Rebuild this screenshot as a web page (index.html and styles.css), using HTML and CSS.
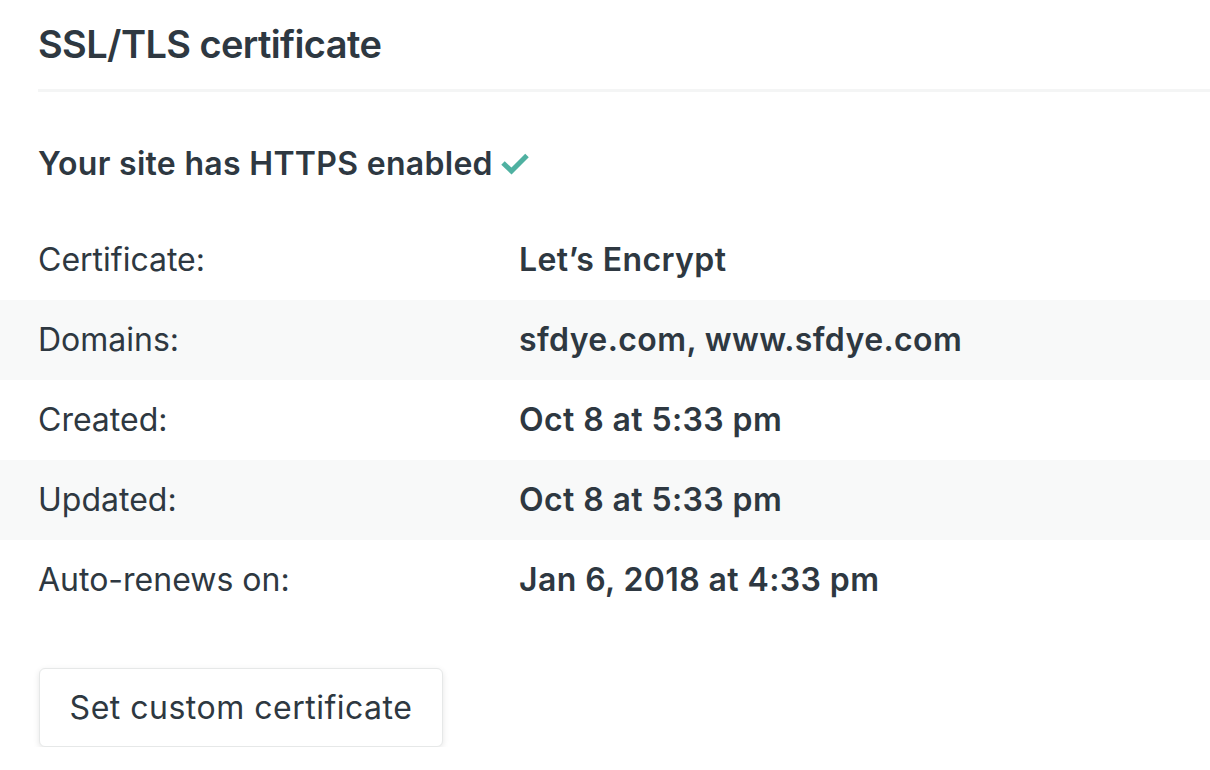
FILE: index.html
```html
<!DOCTYPE html>
<html>
<head>
<meta charset="utf-8">
<link rel="stylesheet" href="styles.css">
</head>
<body>
<section class="card">
  <h2 class="title">SSL/TLS certificate</h2>
  <div class="divider"></div>
  <p class="status">Your site has HTTPS enabled <svg class="check" width="28" height="24" viewBox="0 0 28 24"><path d="M2 11 L10.5 19 L26 3.5" fill="none" stroke="#4fb1a1" stroke-width="5" stroke-linejoin="miter"/></svg></p>
  <dl class="rows">
    <div class="row"><dt>Certificate:</dt><dd>Let’s Encrypt</dd></div>
    <div class="row alt"><dt>Domains:</dt><dd>sfdye.com, www.sfdye.com</dd></div>
    <div class="row"><dt>Created:</dt><dd>Oct 8 at 5:33 pm</dd></div>
    <div class="row alt"><dt>Updated:</dt><dd>Oct 8 at 5:33 pm</dd></div>
    <div class="row"><dt>Auto-renews on:</dt><dd>Jan 6, 2018 at 4:33 pm</dd></div>
  </dl>
  <button class="btn">Set custom certificate</button>
</section>
</body>
</html>
```
FILE: styles.css
```css
html, body { margin: 0; padding: 0; background: #fff; }
body { font-family: Inter, "Liberation Sans", sans-serif; color: #2e3841; }
.title { margin: 0; padding: 20px 0 0 38px; font-size: 38px; font-weight: 600; line-height: 48px; letter-spacing: -0.6px; }
.divider { margin-left: 38px; height: 3px; background: #f4f5f5; margin-top: 21px; }
.status { margin: 0; padding: 52px 0 36px 38px; font-size: 32px; font-weight: 600; line-height: 40px; letter-spacing: 0.3px; display: flex; align-items: center; }
.check { margin-left: 8px; margin-top: 0; }
.rows { margin: 0; }
.row { display: flex; height: 80px; align-items: center; padding-left: 38px; font-size: 32px; line-height: 40px; }
.row.alt { background: #f8f9f9; }
.row dt { width: 481px; font-weight: 400; }
.row dd { margin: 0; font-weight: 600; letter-spacing: 0.4px; }
.btn { margin: 48px 0 0 39px; width: 404px; height: 79px; border: 1px solid #e6e8e8; border-radius: 6px; background: #fff; box-shadow: 0 2px 6px rgba(0,0,0,0.1); font-family: inherit; font-size: 32px; letter-spacing: 0.5px; color: #2e3841; font-weight: 400; padding: 0; display: block; }
```
